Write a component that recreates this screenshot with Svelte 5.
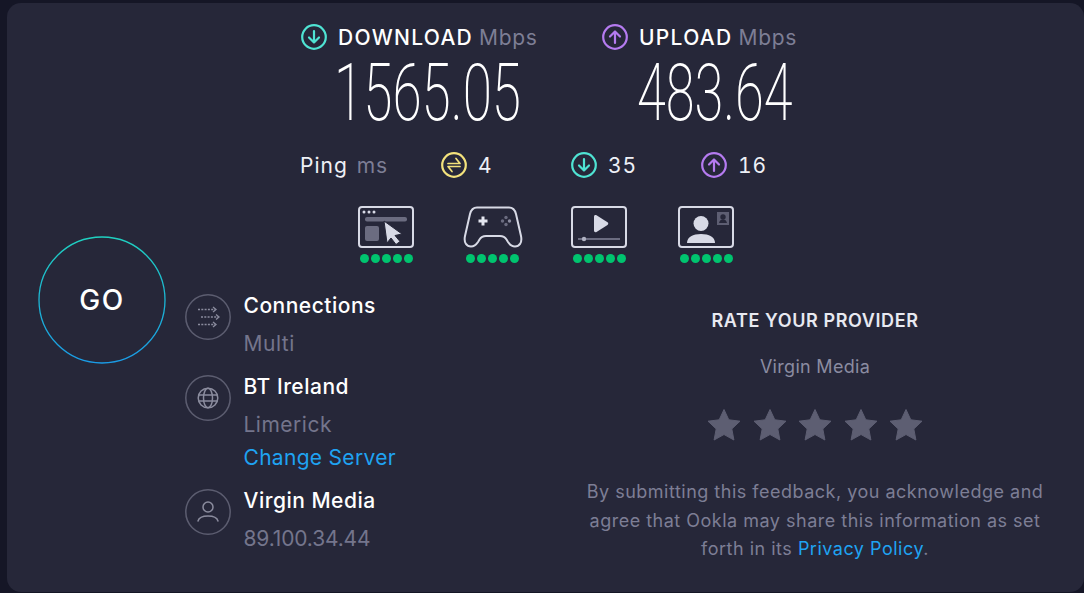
<script>
  const dots = [0, 1, 2, 3, 4];
  const stars = [0, 1, 2, 3, 4];
</script>

{#snippet arrow(color, up)}
  <svg class="ring" viewBox="0 0 26 26" fill="none" stroke={color} stroke-width="2.200" stroke-linecap="round" stroke-linejoin="round">
    <circle cx="13" cy="13" r="11.800" />
    {#if up}
      <path d="M13 19V7.500M8 12.500l5-5 5 5" />
    {:else}
      <path d="M13 7v11.500M8 13.500l5 5 5-5" />
    {/if}
  </svg>
{/snippet}

{#snippet rating()}
  <div class="dots">
    {#each dots as d (d)}<span class="dot"></span>{/each}
  </div>
{/snippet}

<div class="page">
  <main class="panel">
    <div class="go-col">
      <button class="go">
        <svg class="go-ring" viewBox="0 0 128 128" fill="none">
          <defs>
            <linearGradient id="goGrad" x1="0" y1="0" x2="0" y2="1">
              <stop offset="0" stop-color="#1fd0c0" />
              <stop offset="1" stop-color="#1a9be6" />
            </linearGradient>
          </defs>
          <circle cx="64" cy="64" r="63" stroke="url(#goGrad)" stroke-width="1.300" />
        </svg>
        <span>GO</span>
      </button>
    </div>

    <div class="content">
      <section class="speeds">
        <div class="speed dl">
          <div class="speed-head">
            {@render arrow('#4fe3d3', false)}
            <span class="head-label">DOWNLOAD</span><span class="unit">Mbps</span>
          </div>
          <div class="num"><span>1565.05</span></div>
        </div>
        <div class="speed ul">
          <div class="speed-head">
            {@render arrow('#b57bf0', true)}
            <span class="head-label">UPLOAD</span><span class="unit">Mbps</span>
          </div>
          <div class="num"><span>483.64</span></div>
        </div>
      </section>

      <section class="ping">
        <div class="ping-title"><span>Ping</span><span class="unit">ms</span></div>
        <div class="ping-item first">
          <svg class="ring" viewBox="0 0 26 26" fill="none" stroke="#f3e27c" stroke-width="2.200" stroke-linecap="round" stroke-linejoin="round">
            <circle cx="13" cy="13" r="11.800" />
            <path d="M7 11.500h12l-4-5M19 14.500H7l4 5" stroke-width="1.700" />
          </svg>
          <span>4</span>
        </div>
        <div class="ping-item">{@render arrow('#4fe3d3', false)}<span>35</span></div>
        <div class="ping-item">{@render arrow('#b57bf0', true)}<span>16</span></div>
      </section>

      <section class="quality">
        <div class="q">
          <svg viewBox="0 0 56 42" width="56" height="42" fill="none">
            <rect x="1" y="1" width="54" height="40" rx="3" stroke="#d8dae6" stroke-width="2" />
            <circle cx="6" cy="6" r="1.500" fill="#d8dae6" /><circle cx="11" cy="6" r="1.500" fill="#d8dae6" /><circle cx="16" cy="6" r="1.500" fill="#d8dae6" />
            <rect x="7" y="11" width="42" height="4.500" rx="2" fill="#6b6c80" />
            <rect x="7" y="20" width="14" height="15" rx="2" fill="#6b6c80" />
            <path d="M26 15l18 13-7 1.500 5 6-4 3-5-6.500-4 5z" fill="#d8dae6" stroke="#262739" stroke-width="1" stroke-linejoin="round" />
          </svg>
          {@render rating()}
        </div>
        <div class="q">
          <svg viewBox="0 0 60 42" width="60" height="42" fill="none">
            <path d="M14 1.500H46C50 1.500 52 4 53 8L58 30C59.500 37 56 40.500 52 40.500 49 40.500 47 39 45 36L43.500 33.500C42 31 40 30 37 30H23C20 30 18 31 16.500 33.500L15 36C13 39 11 40.500 8 40.500 4 40.500.5 37 2 30L7 8C8 4 10 1.500 14 1.500Z" stroke="#d8dae6" stroke-width="2" stroke-linejoin="round" />
            <path d="M20 10.500v9M15.500 15h9" stroke="#e4e6f0" stroke-width="3" />
            <circle cx="43" cy="11.500" r="1.700" fill="#6b6c80" /><circle cx="43" cy="18.500" r="1.700" fill="#6b6c80" /><circle cx="39.500" cy="15" r="1.700" fill="#6b6c80" /><circle cx="46.500" cy="15" r="1.700" fill="#8a8b9e" />
          </svg>
          {@render rating()}
        </div>
        <div class="q">
          <svg viewBox="0 0 56 42" width="56" height="42" fill="none">
            <rect x="1" y="1" width="54" height="40" rx="3" stroke="#d8dae6" stroke-width="2" />
            <path d="M23 10.500c0-1.500 1.300-2 2.500-1.300l11 7c1 .7 1 2 0 2.700l-11 7c-1.200.7-2.500 0-2.500-1.300z" fill="#d8dae6" />
            <rect x="7" y="32" width="42" height="2" fill="#6b6c80" />
            <circle cx="13" cy="33" r="2.200" fill="#b0b2c2" />
          </svg>
          {@render rating()}
        </div>
        <div class="q">
          <svg viewBox="0 0 56 42" width="56" height="42" fill="none">
            <rect x="1" y="1" width="54" height="40" rx="3" stroke="#d8dae6" stroke-width="2" />
            <circle cx="23" cy="17.500" r="7.500" fill="#d8dae6" />
            <path d="M9 37c0-6 6-9 14-9s14 3 14 9z" fill="#d8dae6" />
            <rect x="39" y="6" width="12" height="13" fill="#5d5e72" />
            <circle cx="45" cy="11" r="2.700" fill="#262739" /><path d="M41 17c.5-2.500 2-3.500 4-3.500s3.500 1 4 3.500z" fill="#262739" />
          </svg>
          {@render rating()}
        </div>
      </section>

      <section class="bottom">
        <div class="info">
          <div class="info-row">
            <svg class="circ" viewBox="0 0 46 46" fill="none" stroke="#8b8c9e" stroke-width="1.300">
              <circle cx="23" cy="23" r="22.200" stroke="#5c5d70" stroke-width="1.500" />
              <path d="M13 15.500h17M16 23h17M13 30.500h17" stroke-dasharray="2 1.300" />
              <path d="M28 13l3 2.500-3 2.500M31 20.500l3 2.500-3 2.500M28 28l3 2.500-3 2.500" />
            </svg>
            <div class="info-text">
              <div class="title">Connections</div>
              <div class="sub">Multi</div>
            </div>
          </div>
          <div class="info-row">
            <svg class="circ" viewBox="0 0 46 46" fill="none" stroke="#8b8c9e" stroke-width="1.500">
              <circle cx="23" cy="23" r="22.200" stroke="#5c5d70" stroke-width="1.500" />
              <circle cx="23" cy="23" r="9.800" />
              <ellipse cx="23" cy="23" rx="4.500" ry="9.800" />
              <path d="M13.500 20h19M13.500 26h19" />
            </svg>
            <div class="info-text">
              <div class="title">BT Ireland</div>
              <div class="sub">Limerick</div>
              <a class="link change" href="#server">Change Server</a>
            </div>
          </div>
          <div class="info-row">
            <svg class="circ" viewBox="0 0 46 46" fill="none" stroke="#8b8c9e" stroke-width="1.500" stroke-linecap="round">
              <circle cx="23" cy="23" r="22.200" stroke="#5c5d70" stroke-width="1.500" />
              <circle cx="23" cy="18" r="5" />
              <path d="M13 32c1-3.500 5-5 10-5s9 1.500 10 5" />
            </svg>
            <div class="info-text">
              <div class="title">Virgin Media</div>
              <div class="sub ip">89.100.34.44</div>
            </div>
          </div>
        </div>

        <div class="rate">
          <h2>RATE YOUR PROVIDER</h2>
          <div class="provider">Virgin Media</div>
          <div class="stars">
            {#each stars as s (s)}
              <svg viewBox="0 0 34 34" width="34" height="34"><path d="M17 1.500l4.800 10.300 11.200 1.400-8.200 7.700 2.100 11.100-9.900-5.500-9.900 5.500 2.100-11.100L1 13.200l11.200-1.400z" fill="#5d5e72" stroke="#5d5e72" stroke-width="1" stroke-linejoin="round" /></svg>
            {/each}
          </div>
          <p>By submitting this feedback, you acknowledge and agree that Ookla may share this information as set forth in its <a class="link" href="#privacy">Privacy Policy</a>.</p>
        </div>
      </section>
    </div>
  </main>
</div>

<style>
  :global(body) {
    margin: 0;
    background: #151626;
  }
  .page {
    width: 1084px;
    height: 593px;
    box-sizing: border-box;
    padding: 3px 0 0 7px;
    overflow: hidden;
    font-family: Inter, "Noto Sans", sans-serif;
    color: #fff;
  }
  .panel {
    height: 589px;
    background: #262739;
    border-radius: 14px;
    display: flex;
  }
  .go-col {
    width: 178px;
    flex: none;
    padding: 233px 0 0 31px;
    box-sizing: border-box;
  }
  .go {
    position: relative;
    display: flex;
    align-items: center;
    justify-content: center;
    width: 128px;
    height: 128px;
    padding: 0;
    border: 0;
    background: none;
    color: #fff;
    font: 500 28px Inter, sans-serif;
    letter-spacing: 1.500px;
  }
  .go-ring {
    position: absolute;
    inset: 0;
  }
  .content {
    flex: 1;
    display: flex;
    flex-direction: column;
  }
  .speeds {
    display: flex;
    padding: 21px 0 0 116px;
  }
  .speed.dl {
    width: 301px;
  }
  .speed-head {
    display: flex;
    align-items: center;
    height: 26px;
    font-size: 21px;
    font-weight: 500;
  }
  .ring {
    width: 26px;
    height: 26px;
    flex: none;
  }
  .head-label {
    margin-left: 11px;
    letter-spacing: 1.300px;
  }
  .unit {
    margin-left: 6px;
    color: #7d7e95;
    font-weight: 400;
    letter-spacing: 0.700px;
  }
  .num {
    height: 70px;
    margin-top: 5px;
    margin-bottom: 1px;
    margin-left: 33px;
    font: 200 80px/76px Roboto, sans-serif;
    white-space: nowrap;
  }
  .ul .num {
    margin-left: 35px;
  }
  .num span {
    display: inline-block;
    transform: scaleX(0.663);
    transform-origin: left center;
  }
  .ul .num span {
    transform: scaleX(0.653);
  }
  .ping {
    display: flex;
    align-items: center;
    height: 26px;
    margin-top: 26px;
    padding-left: 115px;
    font-size: 21px;
    font-weight: 400;
    letter-spacing: 1px;
    font-variant-numeric: tabular-nums;
    color: #eef0f6;
  }
  .ping-title {
    width: 141px;
    display: flex;
    gap: 3px;
  }
  .ping-item {
    display: flex;
    align-items: center;
    gap: 11px;
    width: 130px;
  }
  .quality {
    display: flex;
    margin-top: 28px;
    padding-left: 173px;
  }
  .q {
    display: flex;
    flex-direction: column;
    align-items: center;
    width: 56px;
    margin-right: 50.700px;
  }
  .dots {
    display: flex;
    gap: 2px;
    margin-top: 6px;
  }
  .dot {
    width: 9px;
    height: 9px;
    border-radius: 50%;
    background: #00c46f;
  }
  .bottom {
    display: flex;
    margin-top: 29px;
  }
  .info {
    width: 400px;
    flex: none;
  }
  .info-row {
    display: flex;
    gap: 12.500px;
    margin-bottom: 15px;
  }
  .circ {
    width: 46px;
    height: 46px;
    flex: none;
    margin-top: 2px;
  }
  .info-text {
    display: flex;
    flex-direction: column;
    font-size: 21px;
  }
  .title {
    font-weight: 500;
    line-height: 28px;
    letter-spacing: 0.500px;
    color: #fff;
  }
  .sub {
    margin-top: 10px;
    line-height: 28px;
    letter-spacing: 0.500px;
    color: #74758c;
  }
  .sub.ip {
    letter-spacing: -0.150px;
  }
  .link {
    color: #1fa3f2;
    text-decoration: none;
  }
  .change {
    margin-top: 5px;
    line-height: 28px;
    letter-spacing: 0.300px;
  }
  .rate {
    flex: none;
    width: 480px;
    margin-left: -10px;
    text-align: center;
    padding-top: 17px;
  }
  h2 {
    margin: 0;
    font-size: 18px;
    line-height: 24px;
    font-weight: 600;
    letter-spacing: 0.600px;
    color: #e8e9f1;
  }
  .provider {
    margin-top: 22px;
    font-size: 18px;
    line-height: 24px;
    letter-spacing: 0.300px;
    color: #8b8ca1;
  }
  .stars {
    display: flex;
    justify-content: center;
    gap: 11.500px;
    margin-top: 29px;
  }
  .rate p {
    width: 465px;
    margin: 36px auto 0;
    font-size: 18px;
    line-height: 28.500px;
    letter-spacing: 0.500px;
    color: #7d7e95;
  }
</style>
